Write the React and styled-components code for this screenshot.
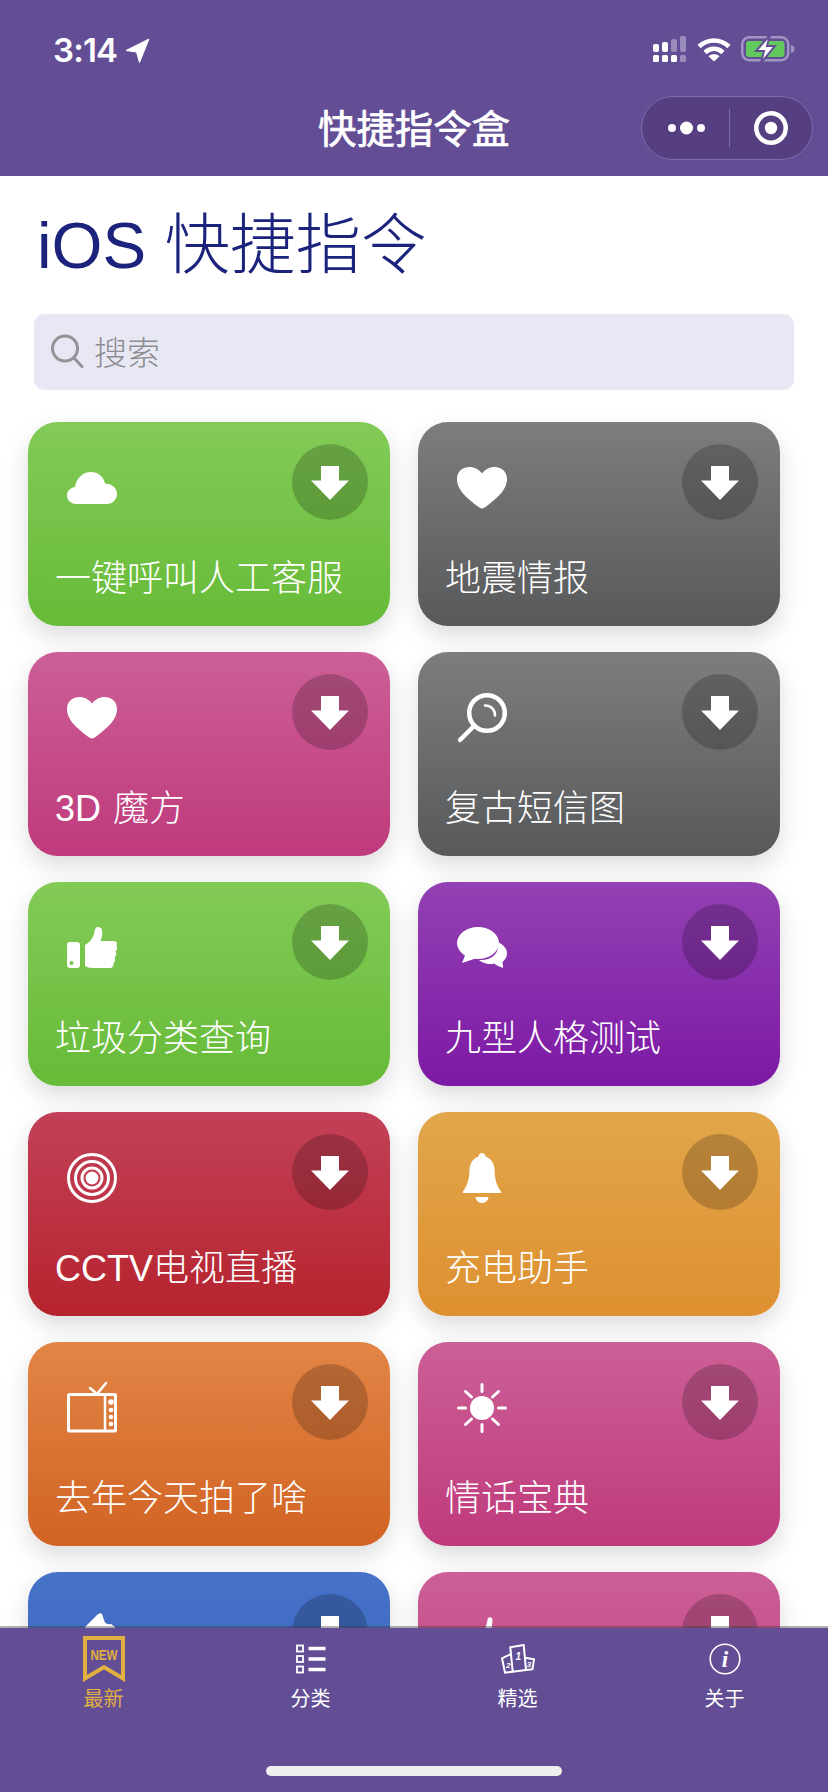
import React from 'react';
import styled, { createGlobalStyle } from 'styled-components';

const GlobalStyle = createGlobalStyle`
  html, body {
    margin: 0;
    padding: 0;
    background: #fff;
  }
  * {
    box-sizing: border-box;
  }
`;

const FONT = `"Liberation Sans", "Noto Sans CJK SC", sans-serif`;
const PURPLE = '#634e96';

const Page = styled.div`
  position: relative;
  width: 828px;
  height: 1792px;
  overflow: hidden;
  background: #fff;
  font-family: ${FONT};
`;

const Header = styled.header`
  height: 176px;
  background: ${PURPLE};
  color: #fff;
`;

const StatusBar = styled.div`
  height: 96px;
  display: flex;
  justify-content: space-between;
  align-items: flex-start;
  padding: 30px 33px 0 53px;
`;

const Clock = styled.div`
  display: flex;
  align-items: center;
  gap: 9px;
  font-family: "Inter", sans-serif;
  font-size: 33px;
  line-height: 40px;
  font-weight: 600;
  letter-spacing: -0.8px;
`;

const StatusIcons = styled.div`
  display: flex;
  align-items: center;
  gap: 10px;
  margin-top: 5px;
`;

const NavBar = styled.div`
  height: 64px;
  display: grid;
  grid-template-columns: 1fr auto 1fr;
  align-items: center;
  padding-right: 15px;
`;

const NavTitle = styled.div`
  grid-column: 2;
  padding-top: 3px;
  margin-left: 15px;
  font-size: 38.4px;
  line-height: 46px;
  font-weight: 400;
  -webkit-text-stroke: 0.7px #fff;
`;

const Capsule = styled.div`
  grid-column: 3;
  justify-self: end;
  width: 172px;
  height: 64px;
  border-radius: 32px;
  background: #553f80;
  border: 1.5px solid #7e6ca8;
  display: flex;
  align-items: center;
`;

const CapsuleSide = styled.div`
  flex: 1;
  height: 38px;
  display: flex;
  align-items: center;
  justify-content: center;
  &:first-child {
    border-right: 1.5px solid #7e6ca8;
    padding-left: 4px;
  }
`;

const Main = styled.main`
  padding: 0 0 0 28px;
`;

const Title = styled.h1`
  margin: 0;
  padding: 37px 0 0 9px;
  height: 138px;
  font-size: 65.5px;
  line-height: 66px;
  font-weight: 300;
  color: #1c237c;
  white-space: nowrap;
`;

const SearchBox = styled.div`
  width: 760px;
  height: 76px;
  margin-left: 6px;
  border-radius: 10px;
  background: #e8e8f4;
  display: flex;
  align-items: center;
  gap: 10px;
  padding: 0 0 3px 16px;
  color: #8c8c8f;
  font-size: 33px;
  font-weight: 300;
`;

const CardGrid = styled.div`
  display: grid;
  grid-template-columns: 362px 362px;
  grid-auto-rows: 204px;
  column-gap: 28px;
  row-gap: 26px;
  margin-top: 32px;
`;

const Card = styled.div`
  position: relative;
  border-radius: 30px;
  background: linear-gradient(180deg, ${p => p.$top}, ${p => p.$bottom});
  box-shadow: 0 10px 24px rgba(0, 0, 0, 0.14);
  padding: 41px 22px 0 27px;
  color: #fff;
`;

const CardTop = styled.div`
  height: 50px;
  padding-left: 12px;
`;

const CardIcon = styled.svg`
  display: block;
  width: 50px;
  height: 50px;
  fill: #fff;
  overflow: visible;
`;

const CardName = styled.div`
  margin-top: 41px;
  font-size: 36px;
  line-height: 50px;
  font-weight: 300;
  word-spacing: 2px;
  white-space: nowrap;
`;

const DownloadBtn = styled.div`
  position: absolute;
  top: 22px;
  right: 22px;
  width: 76px;
  height: 76px;
  padding-top: 3px;
  border-radius: 50%;
  background: rgba(0, 0, 0, 0.2);
  display: flex;
  align-items: center;
  justify-content: center;
`;

const TabBar = styled.nav`
  position: absolute;
  left: 0;
  right: 0;
  bottom: 0;
  height: 166px;
  background: ${PURPLE};
  background-clip: padding-box;
  border-top: 2px solid rgba(60, 60, 60, 0.4);
  display: grid;
  grid-template-columns: repeat(4, 207px);
  align-content: start;
`;

const Tab = styled.div`
  padding-top: 1px;
  display: flex;
  flex-direction: column;
  align-items: center;
  color: ${p => (p.$active ? '#e0b040' : '#fff')};
  font-size: 20px;
  line-height: 20px;
`;

const TabIcon = styled.div`
  height: 60px;
  display: flex;
  align-items: center;
  justify-content: center;
`;

const HomeBar = styled.div`
  position: absolute;
  left: 266px;
  bottom: 16px;
  width: 296px;
  height: 10px;
  border-radius: 5px;
  background: #efefef;
`;

const ArrowDown = () => (
  <svg width="38" height="36" viewBox="0 0 38 36">
    <path d="M10 0h18v14.500h10L19 34 0 14.500h10z" fill="#fff" />
  </svg>
);

const LocationArrow = () => (
  <svg width="24" height="25" viewBox="0 0 24 25">
    <path d="M23 1 0 12.500l10.500 1.500 3 10.500z" fill="#fff" stroke="#fff" strokeWidth="1" strokeLinejoin="round" />
  </svg>
);

const Signal = () => (
  <svg width="34" height="27" viewBox="0 0 34 27" fill="#fff">
    <rect x="0" y="19" width="6" height="7" rx="1.500" />
    <rect x="9" y="19" width="6" height="7" rx="1.500" />
    <rect x="18" y="19" width="6" height="7" rx="1.500" />
    <rect x="27" y="19" width="6" height="7" rx="1.500" opacity=".35" />
    <rect x="0" y="8" width="6" height="8" rx="2" />
    <rect x="9" y="6" width="6" height="10" rx="2" />
    <rect x="18" y="3" width="6" height="13" rx="2" opacity=".35" />
    <rect x="27" y="0" width="6" height="16" rx="2" opacity=".35" />
  </svg>
);

const Wifi = () => (
  <svg width="34" height="25" viewBox="0 0 34 25" fill="none" stroke="#fff" strokeWidth="4.600">
    <path d="M2 9.500c9-8 21-8 30 0" />
    <path d="M8 15.500c5.500-4.800 12.500-4.800 18 0" />
    <path d="M17 24.500l-5.500-5.200c3.200-2.600 7.800-2.600 11 0z" fill="#fff" stroke="none" />
  </svg>
);

const Battery = () => (
  <svg width="54" height="28" viewBox="0 0 54 28">
    <rect x="1.250" y="2.250" width="46" height="23" rx="7" fill="none" stroke="#a195c4" strokeWidth="2.500" />
    <rect x="5" y="6" width="38.500" height="16" rx="3" fill="#62c95c" />
    <path d="M50 10c2.500.5 3.500 2 3.500 4s-1 3.500-3.500 4z" fill="#a195c4" />
    <path d="M29 0 15 16h8l-3 12 14-17h-8z" fill="#fff" stroke={PURPLE} strokeWidth="2" />
  </svg>
);

const MoreDots = () => (
  <svg width="38" height="14" viewBox="0 0 38 14" fill="#fff">
    <circle cx="4" cy="7" r="4" />
    <circle cx="18.500" cy="7" r="6.500" />
    <circle cx="33" cy="7" r="4" />
  </svg>
);

const TargetRing = () => (
  <svg width="36" height="36" viewBox="0 0 36 36">
    <circle cx="18" cy="18" r="14.700" fill="none" stroke="#fff" strokeWidth="4.500" />
    <circle cx="18" cy="18" r="6.200" fill="#fff" />
  </svg>
);

const SearchGlass = () => (
  <svg width="34" height="34" viewBox="0 0 34 34" fill="none" stroke="#949497" strokeWidth="3">
    <circle cx="15" cy="14.500" r="12.500" />
    <path d="M24 24l8 8.500" strokeLinecap="round" />
  </svg>
);

const CARD_ICONS = {
  cloud: <path d="M9 41C4 41 0 37 0 32.500 0 28 3.500 24.500 8 24 9.500 15 16 9 24 9c7 0 12.500 4.500 14 11.500 6.500 0 12 4.500 12 10.500 0 5.500-4.500 10-10 10z" />,
  heart: <path d="M25 45.500c-1.500 0-3-1-4.500-2.200C12 36.500 0 28 0 16 0 8 6 4 12.500 4c5 0 9.500 2.500 12.500 6.500C28 6.500 32.500 4 37.500 4 44 4 50 8 50 16c0 12-12 20.500-20.500 27.300-1.500 1.200-3 2.200-4.500 2.200z" />,
  glass: (
    <g fill="none" stroke="#fff" strokeLinecap="round">
      <circle cx="30" cy="20" r="17.800" strokeWidth="4.500" />
      <path d="M17 33 3 47" strokeWidth="4.500" />
      <path d="M28 12.500c6 0 10 4 10 10" strokeWidth="2.500" />
    </g>
  ),
  thumb: (
    <g>
      <path d="M3 19h7c2 0 3 1 3 3v20c0 2-1 3-3 3H3c-2 0-3-1-3-3V22c0-2 1-3 3-3z M2.500 40a2 2 0 1 0 4 0a2 2 0 1 0-4 0z" fillRule="evenodd" />
      <path d="M18 43V22C22 20 26 15 27 11 28 7 28 4 31 4 35 4 36 8 35 13L33.500 18H47C50 18 50.500 21 49.500 23 50.500 24 50.500 27 48.500 28.500 50 30 49.500 33 47.500 34 49 36 48 39 46.500 40 47 43 45 45 43 45H26C22 45 20 44 18 43Z" />
    </g>
  ),
  chat: (
    <g>
      <ellipse cx="21" cy="20" rx="21" ry="16" />
      <path d="M9 30 5 40 20 35z" />
      <path d="M41 19C47 22 50 26 50 30.500 50 34 48 37 45.500 39 45.500 41 46.500 43.500 46 45 43 44 39 42 37 40.500 32 42 25 40 22 37 31 38 43 33 41 19Z" />
    </g>
  ),
  target: (
    <g fill="none" stroke="#fff">
      <circle cx="25" cy="25" r="23.500" strokeWidth="3" />
      <circle cx="25" cy="25" r="16.500" strokeWidth="3" />
      <circle cx="25" cy="25" r="10" strokeWidth="3" />
      <circle cx="25" cy="25" r="6.500" fill="#fff" stroke="none" />
    </g>
  ),
  bell: (
    <g>
      <path d="M25 0c2 0 3.500 1.500 3.500 3.500C34 5.500 37 10 37.500 16 38 24 38 30 44 38.500c.5 1 0 1.500-1 1.500H7c-1 0-1.500-.5-1-1.500C12 30 12 24 12.500 16 13 10 16 5.500 21.500 3.500 21.500 1.500 23 0 25 0z" />
      <path d="M18.500 44h13c-.5 3.500-3 6-6.500 6s-6-2.500-6.500-6z" />
    </g>
  ),
  tv: (
    <g fill="none" stroke="#fff">
      <rect x="1.500" y="11.500" width="47" height="36.500" rx="1" strokeWidth="3" />
      <path d="M38 12v36" strokeWidth="2.500" />
      <path d="M23 5l7 6 9-11" strokeWidth="2.500" strokeLinecap="round" />
      <g fill="#fff" stroke="none">
        <circle cx="44" cy="19" r="2.800" />
        <circle cx="44" cy="27" r="2.300" />
        <circle cx="44" cy="34" r="2.300" />
        <circle cx="44" cy="41" r="2.300" />
      </g>
    </g>
  ),
  sun: (
    <g stroke="#fff" strokeWidth="3" strokeLinecap="round">
      <circle cx="25" cy="25" r="12" stroke="none" />
      <path d="M25 1.500v7M25 41.500v7M1.500 25h7M41.500 25h7M8.500 8.500l6 5.500M35.500 36l6 5.500M8.500 41.500l6-5.500M35.500 14l6-5.500" />
    </g>
  ),
  pen: <path d="M18 14 30 2Q33-1 35 1L37 7Q38 12 44 11L48 14V30H18Z" />,
  wand: <path d="M31 5c1.500-1.500 4.500-1 4.500 2L33 30h-8z" />,
};

const CardGlyph = ({ name }) => (
  <CardIcon viewBox="0 0 50 50">{CARD_ICONS[name]}</CardIcon>
);

const COLORS = {
  green: ['#82cb57', '#67bb38'],
  pink: ['#cc5f96', '#bf3a7c'],
  gray: ['#7c7d7f', '#58595b'],
  purple: ['#9341b3', '#7c19a5'],
  red: ['#c24158', '#b6232d'],
  amber: ['#e2a64b', '#de9030'],
  orange: ['#e28546', '#d16323'],
  blue: ['#4672c8', '#3561bf'],
};

const SHORTCUTS = [
  { name: '一键呼叫人工客服', color: 'green', icon: 'cloud' },
  { name: '地震情报', color: 'gray', icon: 'heart' },
  { name: '3D 魔方', color: 'pink', icon: 'heart' },
  { name: '复古短信图', color: 'gray', icon: 'glass' },
  { name: '垃圾分类查询', color: 'green', icon: 'thumb' },
  { name: '九型人格测试', color: 'purple', icon: 'chat' },
  { name: 'CCTV电视直播', color: 'red', icon: 'target' },
  { name: '充电助手', color: 'amber', icon: 'bell' },
  { name: '去年今天拍了啥', color: 'orange', icon: 'tv' },
  { name: '情话宝典', color: 'pink', icon: 'sun' },
  { name: '', color: 'blue', icon: 'pen' },
  { name: '', color: 'pink', icon: 'wand' },
];

const NewIcon = () => (
  <svg width="42" height="46" viewBox="0 0 42 46">
    <path d="M2 2h38v40.500L21 31 2 42.500z" fill="none" stroke="#e0b040" strokeWidth="4" />
    <text x="21" y="23.500" textAnchor="middle" fontSize="14" fontWeight="700" fill="#e0b040" fontFamily="Liberation Sans" textLength="27" lengthAdjust="spacingAndGlyphs">NEW</text>
  </svg>
);

const ListIcon = () => (
  <svg width="30" height="30" viewBox="0 0 30 30" fill="none" stroke="#fff">
    <rect x="1" y="1.500" width="6" height="6" strokeWidth="1.800" />
    <rect x="1" y="12" width="6" height="6" strokeWidth="1.800" />
    <rect x="1" y="22.500" width="6" height="6" strokeWidth="1.800" />
    <path d="M12.500 4.500h17M12.500 15h17M12.500 25.500h17" strokeWidth="3.400" />
  </svg>
);

const PodiumIcon = () => (
  <svg width="34" height="30" viewBox="0 0 34 30" fill="none" stroke="#fff" strokeWidth="2" strokeLinejoin="round">
    <path d="M9.300 10.300 1 14.300 4 28.700l7.700-1" />
    <path d="M9.300 3.300 22.700 1 25 26l-13.300 1.700z" />
    <path d="M24 13.700l9 1.600-1.500 10L25 26" />
    <text x="17.300" y="15.500" textAnchor="middle" fontSize="10" fontWeight="700" fill="#fff" stroke="none" fontStyle="italic" fontFamily="Liberation Sans">1</text>
    <text x="7.300" y="23.500" textAnchor="middle" fontSize="8" fontWeight="700" fill="#fff" stroke="none" fontStyle="italic" fontFamily="Liberation Sans">2</text>
    <text x="28" y="23" textAnchor="middle" fontSize="8" fontWeight="700" fill="#fff" stroke="none" fontStyle="italic" fontFamily="Liberation Sans">3</text>
  </svg>
);

const InfoIcon = () => (
  <svg width="32" height="32" viewBox="0 0 32 32">
    <circle cx="16" cy="16" r="14.800" fill="none" stroke="#fff" strokeWidth="1.600" />
    <text x="16" y="24" textAnchor="middle" fontSize="23" fontWeight="700" fontStyle="italic" fill="#fff" fontFamily="Liberation Serif">i</text>
  </svg>
);

const TABS = [
  { label: '最新', icon: <NewIcon />, active: true },
  { label: '分类', icon: <ListIcon /> },
  { label: '精选', icon: <PodiumIcon /> },
  { label: '关于', icon: <InfoIcon /> },
];

export default function App() {
  return (
    <Page>
      <GlobalStyle />
      <Header>
        <StatusBar>
          <Clock>
            3:14
            <LocationArrow />
          </Clock>
          <StatusIcons>
            <Signal />
            <Wifi />
            <Battery />
          </StatusIcons>
        </StatusBar>
        <NavBar>
          <NavTitle>快捷指令盒</NavTitle>
          <Capsule>
            <CapsuleSide>
              <MoreDots />
            </CapsuleSide>
            <CapsuleSide>
              <TargetRing />
            </CapsuleSide>
          </Capsule>
        </NavBar>
      </Header>
      <Main>
        <Title>iOS 快捷指令</Title>
        <SearchBox>
          <SearchGlass />
          搜索
        </SearchBox>
        <CardGrid>
          {SHORTCUTS.map((item, i) => (
            <Card key={i} $top={COLORS[item.color][0]} $bottom={COLORS[item.color][1]}>
              <CardTop>
                <CardGlyph name={item.icon} />
              </CardTop>
              <CardName>{item.name}</CardName>
              <DownloadBtn>
                <ArrowDown />
              </DownloadBtn>
            </Card>
          ))}
        </CardGrid>
      </Main>
      <TabBar>
        {TABS.map(tab => (
          <Tab key={tab.label} $active={tab.active}>
            <TabIcon>{tab.icon}</TabIcon>
            {tab.label}
          </Tab>
        ))}
      </TabBar>
      <HomeBar />
    </Page>
  );
}
